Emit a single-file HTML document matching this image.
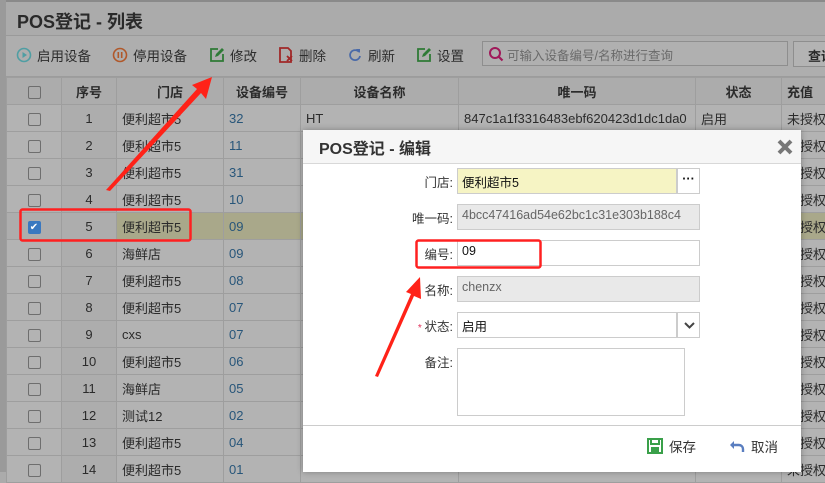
<!DOCTYPE html>
<html><head><meta charset="utf-8"><style>
*{box-sizing:border-box;margin:0;padding:0}
body{width:825px;height:472px;overflow:hidden;background:#ababab;font-family:"Liberation Sans","Noto Sans CJK SC",sans-serif;font-size:13px;color:#2b2b2b;position:relative}
.abs{position:absolute}
.lstrip{left:0;top:0;width:6px;height:472px;background:#9a9a9a}
.title{left:6px;top:0;width:819px;height:36px;border-top:2px solid #8a8a8a;border-bottom:1px solid #9a9a9a;background:#ababab;font-size:18px;font-weight:bold;padding:6px 0 0 11px;color:#2a2a2a}
.tb{left:6px;top:36px;width:819px;height:41px;background:#aeaeae;border-bottom:1px solid #9c9c9c}
.btn{position:absolute;top:45px;font-size:13.5px;color:#2d2d2d;display:flex;align-items:center;gap:5px;white-space:nowrap}
.search{left:482px;top:41px;width:306px;height:25px;border:1px solid #8e8e8e;background:#b0b0b0;color:#6a6a6a;padding:3px 0 0 24px;font-size:12.5px;white-space:nowrap}
.qbtn{left:793px;top:41px;width:40px;height:26px;border:1px solid #8e8e8e;background:#b3b3b3;font-weight:bold;padding:4px 0 0 14px;white-space:nowrap;overflow:hidden}
table{position:absolute;left:6px;top:77px;width:835px;border-collapse:collapse;table-layout:fixed}
td{border:1px solid #9e9e9e;height:27px;background:#b3b3b3;padding:0 5px;white-space:nowrap;overflow:hidden;font-size:13px}
tr.h td{background:#acacac;font-weight:bold;text-align:center}
td.c{text-align:center}
td.n{background:#adadad;text-align:center}
td.b{color:#28567a}
tr.sel td{background:#a9a88a}
tr.sel td.n,tr.sel td.cb{background:#adadad}
.cbx{display:inline-block;width:13px;height:13px;border:1px solid #6e6e6e;border-radius:2px;vertical-align:middle}
.cbx.on{background:#3a78c0;border-color:#3a78c0;color:#fff;font-size:10px;line-height:11px;text-align:center}
.dlg{left:303px;top:130px;width:498px;height:342px;background:#fff;box-shadow:0 0 6px rgba(0,0,0,.3)}
.dh{position:absolute;left:0;top:0;width:498px;height:34px;background:#f6f6f6;border-bottom:1px solid #d8d8d8;font-size:16px;font-weight:bold;padding:5px 0 0 16px;color:#333}
.lab{position:absolute;width:150px;left:0;text-align:right;font-size:12.5px;color:#333}
.inp{position:absolute;left:154px;width:243px;height:26px;border:1px solid #ccc;font-size:12.5px;padding:3px 0 0 4px;color:#111}
.foot{position:absolute;left:0;top:295px;width:498px;border-top:1px solid #ccc}
</style></head><body>
<div class="abs lstrip"></div>
<div class="abs title">POS登记 - 列表</div>
<div class="abs tb"></div>
<div class="btn" style="left:16px"><svg width="16" height="16"><circle cx="8" cy="8" r="6.5" fill="none" stroke="#4f9ea3" stroke-width="1.6"/><path d="M6.5 5v6l4.5-3z" fill="#4f9ea3"/></svg>启用设备</div>
<div class="btn" style="left:112px"><svg width="16" height="16"><circle cx="8" cy="8" r="6.5" fill="none" stroke="#b0582a" stroke-width="1.6"/><path d="M6.3 5v6M9.7 5v6" stroke="#b0582a" stroke-width="1.6"/></svg>停用设备</div>
<div class="btn" style="left:209px"><svg width="16" height="16"><path d="M9 2H2v12h12V7" fill="none" stroke="#2f7a36" stroke-width="1.8"/><path d="M6 10l1-3 6-6 2 2-6 6z" fill="#2f7a36"/></svg>修改</div>
<div class="btn" style="left:278px"><svg width="16" height="16"><path d="M2 1h8l3 3v11H2z" fill="none" stroke="#a02828" stroke-width="1.8"/><path d="M9 9l5 5M14 9l-5 5" stroke="#a02828" stroke-width="1.8"/></svg>删除</div>
<div class="btn" style="left:347px"><svg width="16" height="16"><path d="M12 5A5 5 0 1 0 13 9" fill="none" stroke="#4a6aa8" stroke-width="1.8"/><path d="M9 2l4 0 0 4z" fill="#4a6aa8"/></svg>刷新</div>
<div class="btn" style="left:416px"><svg width="16" height="16"><path d="M9 2H2v12h12V7" fill="none" stroke="#2f7a36" stroke-width="1.8"/><path d="M6 10l1-3 6-6 2 2-6 6z" fill="#2f7a36"/></svg>设置</div>
<div class="abs search">可输入设备编号/名称进行查询<svg class="abs" style="left:5px;top:4px" width="16" height="16"><circle cx="7" cy="7" r="5" fill="none" stroke="#a0195a" stroke-width="2"/><path d="M10.5 10.5l4 4" stroke="#a0195a" stroke-width="2.2"/></svg></div>
<div class="abs qbtn">查询</div>
<table>
<colgroup><col style="width:55px"><col style="width:55px"><col style="width:107px"><col style="width:77px"><col style="width:158px"><col style="width:237px"><col style="width:86px"><col style="width:60px"></colgroup>
<tr class="h"><td><span class="cbx"></span></td><td>序号</td><td>门店</td><td>设备编号</td><td>设备名称</td><td>唯一码</td><td>状态</td><td style="text-align:left">充值</td></tr>
<tr><td class="c cb"><span class="cbx"></span></td><td class="n">1</td><td>便利超市5</td><td class="b">32</td><td>HT</td><td>847c1a1f3316483ebf620423d1dc1da0</td><td>启用</td><td>未授权</td></tr>
<tr><td class="c"><span class="cbx"></span></td><td class="n">2</td><td>便利超市5</td><td class="b">11</td><td></td><td></td><td></td><td>未授权</td></tr>
<tr><td class="c"><span class="cbx"></span></td><td class="n">3</td><td>便利超市5</td><td class="b">31</td><td></td><td></td><td></td><td>未授权</td></tr>
<tr><td class="c"><span class="cbx"></span></td><td class="n">4</td><td>便利超市5</td><td class="b">10</td><td></td><td></td><td></td><td>未授权</td></tr>
<tr class="sel"><td class="c cb"><span class="cbx on">✔</span></td><td class="n">5</td><td>便利超市5</td><td class="b">09</td><td></td><td></td><td></td><td>未授权</td></tr>
<tr><td class="c"><span class="cbx"></span></td><td class="n">6</td><td>海鲜店</td><td class="b">09</td><td></td><td></td><td></td><td>未授权</td></tr>
<tr><td class="c"><span class="cbx"></span></td><td class="n">7</td><td>便利超市5</td><td class="b">08</td><td></td><td></td><td></td><td>未授权</td></tr>
<tr><td class="c"><span class="cbx"></span></td><td class="n">8</td><td>便利超市5</td><td class="b">07</td><td></td><td></td><td></td><td>未授权</td></tr>
<tr><td class="c"><span class="cbx"></span></td><td class="n">9</td><td>cxs</td><td class="b">07</td><td></td><td></td><td></td><td>未授权</td></tr>
<tr><td class="c"><span class="cbx"></span></td><td class="n">10</td><td>便利超市5</td><td class="b">06</td><td></td><td></td><td></td><td>未授权</td></tr>
<tr><td class="c"><span class="cbx"></span></td><td class="n">11</td><td>海鲜店</td><td class="b">05</td><td></td><td></td><td></td><td>未授权</td></tr>
<tr><td class="c"><span class="cbx"></span></td><td class="n">12</td><td>测试12</td><td class="b">02</td><td></td><td></td><td></td><td>未授权</td></tr>
<tr><td class="c"><span class="cbx"></span></td><td class="n">13</td><td>便利超市5</td><td class="b">04</td><td></td><td></td><td></td><td>未授权</td></tr>
<tr><td class="c"><span class="cbx"></span></td><td class="n">14</td><td>便利超市5</td><td class="b">01</td><td></td><td></td><td></td><td>未授权</td></tr>
</table>
<div class="abs dlg">
<div class="dh">POS登记 - 编辑<svg class="abs" style="left:474px;top:9px" width="16" height="16"><path d="M2 2l12 12M14 2L2 14" stroke="#777" stroke-width="4"/></svg></div>
<div class="lab" style="top:42px">门店:</div>
<div class="inp" style="top:38px;background:#f6f4c4;width:220px">便利超市5</div>
<div class="inp" style="top:38px;left:374px;width:23px;text-align:center;padding:0;font-weight:bold;line-height:20px">···</div>
<div class="lab" style="top:78px">唯一码:</div>
<div class="inp" style="top:74px;background:#e9e9e9;color:#666">4bcc47416ad54e62bc1c31e303b188c4</div>
<div class="lab" style="top:114px">编号:</div>
<div class="inp" style="top:110px">09</div>
<div class="lab" style="top:150px">名称:</div>
<div class="inp" style="top:146px;background:#e9e9e9;color:#666">chenzx</div>
<div class="lab" style="top:186px"><span style="color:#e0305a;font-size:10px">* </span>状态:</div>
<div class="inp" style="top:182px;width:220px">启用</div>
<div class="inp" style="top:182px;left:374px;width:23px;padding:6px 0 0 6px"><svg width="11" height="8"><path d="M1 1l4.5 4.5L10 1" fill="none" stroke="#444" stroke-width="2"/></svg></div>
<div class="lab" style="top:222px">备注:</div>
<div class="inp" style="top:218px;width:228px;height:68px"></div>
<div class="foot"></div>
<div class="abs" style="left:344px;top:306px;display:flex;align-items:center;gap:6px;font-size:13.5px;color:#333"><svg width="16" height="16"><rect x="1" y="1" width="14" height="14" fill="none" stroke="#3aa04a" stroke-width="2"/><rect x="4" y="1" width="8" height="5" fill="none" stroke="#3aa04a" stroke-width="2"/><rect x="4" y="9" width="8" height="5" fill="#3aa04a"/></svg>保存</div>
<div class="abs" style="left:426px;top:306px;display:flex;align-items:center;gap:6px;font-size:13.5px;color:#333"><svg width="16" height="16"><path d="M5 3L1 7l4 4z" fill="#5a7ec0"/><path d="M4 7h6a4 4 0 0 1 4 4v3" fill="none" stroke="#5a7ec0" stroke-width="2.4"/></svg>取消</div>
</div>
<svg class="abs" style="left:0;top:0" width="825" height="472">
<rect x="20.5" y="209.5" width="170" height="31" rx="2" fill="none" stroke="#ff2020" stroke-width="2.5"/>
<rect x="416.5" y="240.5" width="124" height="27" rx="2" fill="none" stroke="#ff2020" stroke-width="2.5"/>
<polygon points="106,190 110,191 201,93 206,99 212,77 192,85 197,89" fill="#ff2218"/>
<polygon points="375,376 378,377 414,296 421,299 420,277 406,292 411,294" fill="#ff2218"/>
</svg>
</body></html>
